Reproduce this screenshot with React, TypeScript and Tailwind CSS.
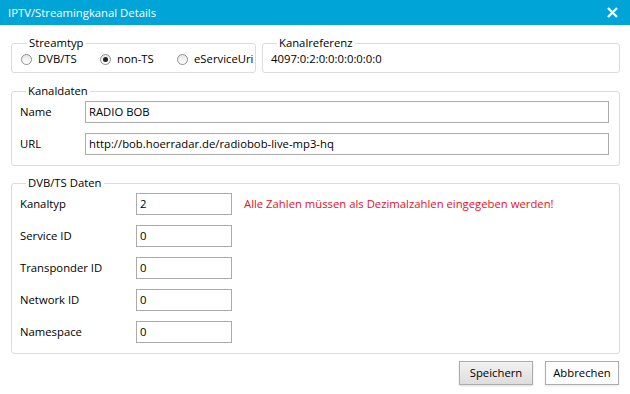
import React from 'react';

const font = { fontFamily: '"Open Sans", "Noto Sans", sans-serif' };

const Radio = ({ label, checked = false }: { label: string; checked?: boolean }) => (
    <label className="flex items-center gap-[6px]">
        <span className="w-[11px] h-[11px] rounded-full border border-[#8f8f8f] bg-gradient-to-b from-[#e6e6e6] to-[#ffffff] flex items-center justify-center">
            {checked && <span className="w-[5px] h-[5px] rounded-full bg-[#222]" />}
        </span>
        <span>{label}</span>
    </label>
);

const Field = ({ label, value, labelWidth, inputWidth, extra }: {
    label: string;
    value: string;
    labelWidth: string;
    inputWidth: string;
    extra?: React.ReactNode;
}) => (
    <div className="flex items-center">
        <span className={labelWidth}>{label}</span>
        <div className={`${inputWidth} h-[22px] border border-[#ababab] bg-white px-[3px] flex items-center`}>
            {value}
        </div>
        {extra}
    </div>
);

export default function App() {
    return (
        <div className="w-[630px] h-[394px] bg-white flex flex-col text-[11.3px] text-black leading-[16px]" style={font}>
            {/* Titelleiste */}
            <div className="h-[25px] bg-[#01a4d7] flex items-center justify-between pl-[8px] pr-[12px] text-white text-[11.3px]">
                <span>IPTV/Streamingkanal Details</span>
                <svg width="11" height="11" viewBox="0 0 11 11">
                    <path d="M1 1 L10 10 M10 1 L1 10" stroke="white" strokeWidth="2.4" />
                </svg>
            </div>

            <div className="flex flex-col pl-[11px] pr-[10px] pt-[10px]">
                <div className="flex gap-[6px]">
                    <fieldset className="w-[245px] border border-[#dcdcdc] rounded-[3px] pl-[9px] pb-[5px]">
                        <legend className="ml-[6px] px-[2px]">Streamtyp</legend>
                        <div className="flex items-center h-[16px]">
                            <div className="w-[79px]"><Radio label="DVB/TS" /></div>
                            <div className="w-[77px]"><Radio label="non-TS" checked /></div>
                            <Radio label="eServiceUri" />
                        </div>
                    </fieldset>
                    <fieldset className="flex-1 border border-[#dcdcdc] rounded-[3px] pl-[8px] pb-[5px]">
                        <legend className="ml-[6px] px-[2px]">Kanalreferenz</legend>
                        <div className="h-[16px]">4097:0:2:0:0:0:0:0:0:0</div>
                    </fieldset>
                </div>

                <fieldset className="mt-[10px] border border-[#dcdcdc] rounded-[3px] pl-[8px] pr-[10px] pt-[2px] pb-[10px]">
                    <legend className="ml-[6px] px-[2px]">Kanaldaten</legend>
                    <div className="flex flex-col gap-[10px]">
                        <Field label="Name" value="RADIO BOB" labelWidth="w-[65px]" inputWidth="flex-1" />
                        <Field label="URL" value="http://bob.hoerradar.de/radiobob-live-mp3-hq" labelWidth="w-[65px]" inputWidth="flex-1" />
                    </div>
                </fieldset>

                <fieldset className="mt-[9px] border border-[#dcdcdc] rounded-[3px] pl-[8px] pt-[2px] pb-[10px]">
                    <legend className="ml-[6px] px-[2px]">DVB/TS Daten</legend>
                    <div className="flex flex-col gap-[10px]">
                        <Field
                            label="Kanaltyp"
                            value="2"
                            labelWidth="w-[116px]"
                            inputWidth="w-[96px]"
                            extra={<span className="ml-[12px] text-[#e81123]">Alle Zahlen müssen als Dezimalzahlen eingegeben werden!</span>}
                        />
                        <Field label="Service ID" value="0" labelWidth="w-[116px]" inputWidth="w-[96px]" />
                        <Field label="Transponder ID" value="0" labelWidth="w-[116px]" inputWidth="w-[96px]" />
                        <Field label="Network ID" value="0" labelWidth="w-[116px]" inputWidth="w-[96px]" />
                        <Field label="Namespace" value="0" labelWidth="w-[116px]" inputWidth="w-[96px]" />
                    </div>
                </fieldset>

                <div className="flex justify-end gap-[12px] mt-[7px] pr-[1px]">
                    <button className="w-[74px] h-[24px] border border-[#acacac] bg-gradient-to-b from-[#f2f2f2] to-[#dddddd] shadow-[0_1px_2px_rgba(0,0,0,0.15)]">
                        Speichern
                    </button>
                    <button className="w-[74px] h-[24px] border border-[#adadad] bg-[#fdfdfd] shadow-[0_1px_2px_rgba(0,0,0,0.1)]">
                        Abbrechen
                    </button>
                </div>
            </div>
        </div>
    );
}
